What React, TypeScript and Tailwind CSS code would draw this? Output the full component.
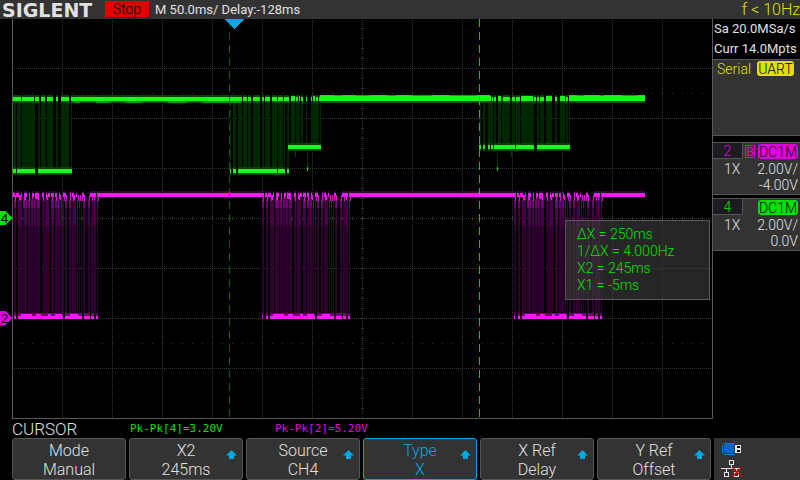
import clsx from "clsx"

type Span = [number, number]

// Plot coordinates: 712 x 400, graticule starts at x = 12
const GREEN_HIGH: Span[] = [
  [13, 21], [22, 34], [35, 39], [41, 45], [47, 53], [56, 58], [61, 69], [71, 242],
  [243, 247], [248, 251], [253, 260], [262, 264], [265, 270], [272, 277], [278, 283], [284, 289],
  [291, 295], [296, 298], [299, 300], [301, 303], [306, 307], [311, 312], [313, 315], [316, 318],
  [319, 491], [492, 493], [494, 496], [498, 501], [503, 510], [512, 515], [516, 520], [521, 533],
  [534, 536], [537, 539], [540, 544], [546, 552], [555, 557], [560, 565], [566, 568], [569, 645],
]
const GREEN_BOLD: Span[] = [[291, 295], [299, 300], [313, 315], [320, 491], [498, 501], [521, 533], [546, 552], [560, 565], [569, 645]]
const GREEN_LOW: Span[] = [[13, 16], [17, 35], [38, 72], [230, 231], [233, 236], [238, 277], [278, 285], [287, 289]]
const GREEN_MID: Span[] = [[288, 321], [479, 481], [483, 485], [488, 490], [491, 493], [494, 515], [516, 534], [537, 570]]
const GREEN_DEEP_BARS: Span[] = [
  [13, 16], [17, 21], [22, 35], [38, 40], [41, 46], [47, 53], [56, 58], [61, 69], [71, 72],
  [230, 231], [233, 236], [238, 242], [243, 247], [248, 251], [253, 260], [262, 264], [265, 270],
  [272, 277], [278, 283], [284, 285], [287, 289],
]
const GREEN_SHORT_BARS: Span[] = [
  [291, 295], [296, 300], [301, 303], [306, 307], [311, 319], [320, 321],
  [479, 481], [483, 485], [488, 493], [494, 496], [498, 501], [502, 510], [512, 515], [516, 520],
  [521, 534], [537, 539], [540, 544], [546, 552], [555, 557], [560, 565], [566, 568], [569, 570],
]

// one UART frame on channel 2, relative to its start
const FRAME_STARTS = [10, 262, 514]
const FRAME_BARS: Span[] = [
  [0, 2], [4, 6], [8, 12], [13, 17], [18, 30], [32, 39], [41, 44], [45, 52], [53, 54], [55, 57],
  [59, 61], [62, 66], [67, 68], [69, 70], [71, 72], [73, 75], [78, 80], [81, 86], [87, 88],
]
const FRAME_HIGH: Span[] = [
  [0, 2], [3, 5], [6, 9], [11, 12], [14, 17], [19, 20], [22, 24], [25, 29], [32, 34], [36, 37], [38, 40],
  [41, 44], [45, 47], [49, 50], [53, 56], [60, 61], [62, 64], [66, 67], [72, 74], [80, 86], [87, 88],
]
const FRAME_LOW: Span[] = [[0, 1], [4, 6], [8, 53], [55, 72], [74, 80], [81, 84], [86, 88]]
const MAGENTA_IDLE: Span[] = [[98, 262], [350, 514], [602, 645]]

const softKeys = [
  { label: "Mode", value: "Manual", arrow: false, active: false },
  { label: "X2", value: "245ms", arrow: true, active: false },
  { label: "Source", value: "CH4", arrow: true, active: false },
  { label: "Type", value: "X", arrow: true, active: true },
  { label: "X Ref", value: "Delay", arrow: true, active: false },
  { label: "Y Ref", value: "Offset", arrow: true, active: false },
]

function Spans({ spans, y, h, fill, dx = 0 }: { spans: Span[]; y: number; h: number; fill: string; dx?: number }) {
  return (
    <>
      {spans.map(([a, b]) => {
        const from = Math.max(a + dx, 13)
        const to = b + dx
        return to > from ? <rect key={a} x={from} y={y} width={to - from} height={h} fill={fill} /> : null
      })}
    </>
  )
}

function Graticule() {
  const cols = Array.from({ length: 13 }, (_, i) => 62 + i * 50)
  const rows = Array.from({ length: 7 }, (_, i) => 49 + i * 50)
  return (
    <g stroke="#363636" strokeDasharray="1 1">
      {cols.map((x) => <line key={x} x1={x + 0.5} x2={x + 0.5} y1="1" y2="399" />)}
      {rows.map((y) => <line key={y} x1="14" x2="712" y1={y + 0.5} y2={y + 0.5} />)}
      {/* center axis ticks */}
      <line x1="22" x2="712" y1="199.5" y2="199.5" strokeWidth="3" strokeDasharray="1 9" />
      <line x1="362.5" x2="362.5" y1="9" y2="399" strokeWidth="3" strokeDasharray="1 9" />
      <line x1="22" x2="712" y1="74.5" y2="74.5" strokeDasharray="1 9" />
      <line x1="22" x2="712" y1="324.5" y2="324.5" strokeDasharray="1 9" />
    </g>
  )
}

function GreenTrace() {
  return (
    <g>
      <Spans spans={GREEN_DEEP_BARS} y={76} h={74} fill="#002800" />
      <Spans spans={GREEN_SHORT_BARS} y={76} h={50} fill="#002800" />
      <Spans spans={GREEN_HIGH} y={76} h={8} fill="#004600" />
      <Spans spans={GREEN_HIGH} y={78} h={4} fill="#14ff14" />
      <Spans spans={GREEN_BOLD} y={77} h={5} fill="#14ff14" />
      <Spans spans={[[72, 242]]} y={82} h={1} fill="#008200" />
      <Spans spans={[[75, 80], [96, 110], [126, 142], [168, 186], [203, 241]]} y={82} h={2} fill="#009600" />
      <Spans spans={[[320, 490], [569, 645]]} y={76} h={1} fill="#14e614" />
      <Spans spans={[[334, 342], [356, 370], [388, 396], [412, 432], [450, 477], [577, 584], [600, 604], [622, 638]]} y={76} h={1} fill="#14a014" />
      <Spans spans={GREEN_LOW} y={148} h={8} fill="#004600" />
      <Spans spans={GREEN_LOW} y={150} h={4} fill="#14ff14" />
      <Spans spans={GREEN_MID} y={124} h={8} fill="#004600" />
      <Spans spans={GREEN_MID} y={126} h={4} fill="#14ff14" />
      {/* glitches below the mid level */}
      <Spans spans={[[295, 296], [511, 512]]} y={132} h={6} fill="#004600" />
      <Spans spans={[[307, 308], [497, 498]]} y={132} h={20} fill="#003000" />
      <Spans spans={[[307, 308], [497, 498]]} y={148} h={4} fill="#14e014" />
    </g>
  )
}

function MagentaTrace() {
  return (
    <g>
      {FRAME_STARTS.map((start) => (
        <g key={start}>
          <Spans spans={FRAME_BARS} dx={start} y={178} h={118} fill="#300030" />
          <Spans spans={FRAME_BARS.map(([a, b], i): Span => [i % 2 ? a + 1 : a, b])} dx={start} y={181} h={26} fill="#460046" />
          <Spans spans={FRAME_BARS.filter((_, i) => i % 3 !== 2)} dx={start} y={181} h={8} fill="#720072" />
          <Spans spans={[[20, 21], [23, 24], [26, 27], [34, 35], [47, 48], [50, 51], [83, 84]]} dx={start} y={181} h={114} fill="#220022" />
          <Spans spans={FRAME_HIGH} dx={start} y={172} h={3} fill="#3c003c" />
          <Spans spans={FRAME_HIGH} dx={start} y={174} h={4} fill="#ff14ff" />
          <Spans spans={FRAME_BARS.map(([a]): Span => [a + 1, a + 2])} dx={start} y={176} h={6} fill="#d214d2" />
          <Spans spans={FRAME_BARS.filter(([a, b]) => b - a > 3).map(([, b]): Span => [b - 2, b - 1])} dx={start} y={176} h={5} fill="#ff14ff" />
          <Spans spans={[[22, 23], [25, 29], [33, 34], [36, 38], [46, 47], [49, 51]]} dx={start} y={177} h={3} fill="#e014e0" />
          <Spans spans={FRAME_LOW} dx={start} y={294} h={3} fill="#6e006e" />
          <Spans spans={[[11, 22], [26, 31], [38, 41], [45, 52], [60, 68]]} dx={start} y={295} h={2} fill="#ff14ff" />
          <Spans spans={FRAME_LOW} dx={start} y={297} h={3} fill="#ff14ff" />
        </g>
      ))}
      <Spans spans={MAGENTA_IDLE} y={172} h={2} fill="#3c003c" />
      <Spans spans={MAGENTA_IDLE} y={174} h={4} fill="#ff14ff" />
    </g>
  )
}

function Plot() {
  return (
    <svg viewBox="0 0 712 400" preserveAspectRatio="none" shapeRendering="crispEdges" className="block h-full w-full font-['Liberation_Sans',sans-serif]">
      <Graticule />
      <GreenTrace />
      <MagentaTrace />
      <path d="M12.5 0V399.5H712" fill="none" stroke="#5a5a5a" />
      {/* cursors */}
      <line x1="229.5" x2="229.5" y1="0" y2="399" stroke="#006400" strokeDasharray="8 5" />
      <line x1="479.5" x2="479.5" y1="0" y2="399" stroke="#00d200" strokeDasharray="8 5" />
      <path d="M225 0H244L234.5 10Z" fill="#00aae1" />
      <path d="M0 192H5L12 199L5 206H0Z" fill="#00e100" />
      <path d="M0 292H5L12 299L5 306H0Z" fill="#e100e1" />
      <text x="1" y="204" fontSize="13">4</text>
      <text x="1" y="304" fontSize="13">2</text>
    </svg>
  )
}

function Readout() {
  return (
    <div className="absolute top-[201px] right-[2px] w-[145px] border border-[#5a5a5a] bg-[#404040]/60 py-[5px] pl-[11px] text-[14px] leading-[17px] text-[#00e100]">
      <div>ΔX = 250ms</div>
      <div>1/ΔX = 4.000Hz</div>
      <div>X2 = 245ms</div>
      <div>X1 = -5ms</div>
    </div>
  )
}

function Channel({ id, scale, offset, bandwidth = false }: { id: string; scale: string; offset: string; bandwidth?: boolean }) {
  const magenta = id === "2"
  return (
    <section className="border-y border-[#555] bg-[#333] text-[14px] leading-4 text-[#e1e1e1]">
      <div className="flex items-start justify-between">
        <div className={clsx("h-4 w-[30px] rounded-br-xs border-r border-b border-[#555] bg-[#1c1c20] text-center leading-4", magenta ? "text-[#e100e1]" : "text-[#00e100]")}>{id}</div>
        <div className="mt-[1px] mr-[2px] flex items-center gap-[3px] text-black">
          {bandwidth && <span className="h-[13px] w-[10px] border border-[#e100e1] text-center text-[12px] leading-[12px] font-normal text-[#e100e1]">B</span>}
          <span className={clsx("h-[15px] w-10 rounded-[3px] text-center leading-4", magenta ? "bg-[#e100e1]" : "bg-[#00e100]")}>DC1M</span>
        </div>
      </div>
      <div className="mt-[2px] flex justify-between pr-[2px] pl-[11px]">
        <span>1X</span>
        <span>{scale}</span>
      </div>
      <div className="pr-[2px] pb-[1px] text-right">{offset}</div>
    </section>
  )
}

function SidePanel() {
  return (
    <aside className="flex w-[88px] shrink-0 flex-col border-l border-[#5a5a5a]">
      <div className="pl-[1px] text-[13px] leading-5 font-normal whitespace-nowrap text-[#e1e1e1]">
        <div>Sa 20.0MSa/s</div>
        <div>Curr 14.0Mpts</div>
      </div>
      <div className="mb-[6px] flex h-[77px] items-start gap-[6px] border-y border-[#555] bg-[#333] pt-[1px] pl-[4px] text-[14px] leading-4 text-[#e1e100]">
        <span>Serial</span>
        <span className="h-[15px] w-[37px] rounded-[3px] bg-[#e1e100] text-center text-black">UART</span>
      </div>
      <div className="flex flex-col gap-[3px]">
        <Channel id="2" scale="2.00V/" offset="-4.00V" bandwidth />
        <Channel id="4" scale="2.00V/" offset="0.0V" />
      </div>
    </aside>
  )
}

function StatusIcons() {
  return (
    <div className="ml-[3px] w-[86px] shrink-0 bg-[#333] pl-[7px]">
      <svg width="22" height="42" viewBox="0 0 22 42" shapeRendering="crispEdges" fill="none">
        <path d="M4 6H13V15H4L3 14V7Z" fill="#0069c3" />
        <path d="M14 5.5H3.5L1.5 7.5V14.5L3.5 16.5H14" stroke="#0082d2" />
        <path d="M14 7H20V15H14Z" fill="#e1e1e1" />
        <path d="M16 8H19V10H16ZM16 12H19V14H16Z" fill="#000" />
        <path d="M8.5 22.5H12.5V26.5H8.5ZM10.5 27V30M0 30.5H20M5.5 31V34M15.5 31V34M3.5 34.5H7.5V38.5H3.5ZM13.5 34.5H17.5V38.5H13.5Z" stroke="#e1e1e1" />
        <path d="M11 29L21 39M21 29L11 39" stroke="#e10000" strokeWidth="1.4" shapeRendering="auto" />
      </svg>
    </div>
  )
}

function UpArrow() {
  return (
    <svg width="11" height="9" viewBox="0 0 11 9" className="absolute top-[11px] right-[5px] fill-current text-[#00aae1]">
      <path d="M5.5 0L11 5.5H8V9H3V5.5H0Z" />
    </svg>
  )
}

export default function App() {
  return (
    <div className="flex h-screen flex-col overflow-hidden bg-black font-[Roboto,'Liberation_Sans',sans-serif] font-light">
      <header className="flex h-[19px] shrink-0 items-center bg-[#333] text-[13px] leading-[19px] font-normal text-[#e1e1e1]">
        <h1 className="w-[105px] pl-[2px] font-['DejaVu_Sans',sans-serif] text-[19px] leading-[22px] font-bold">SIGLENT</h1>
        <span className="mb-[1px] h-4 w-11 bg-[#e10000] text-center text-[14px] leading-[17px] font-light text-black">Stop</span>
        <span className="ml-[6px]">M 50.0ms/ Delay:-128ms</span>
        <span className="ml-auto text-[16px] font-light text-[#e1e100]">f &lt; 10Hz</span>
      </header>

      <main className="flex min-h-0 flex-1">
        <div className="relative min-w-0 flex-1">
          <Plot />
          <Readout />
        </div>
        <SidePanel />
      </main>

      <div className="flex h-[19px] shrink-0 items-center pt-[2px] pl-3 font-['DejaVu_Sans_Mono',monospace] text-[11px] font-normal">
        <h2 className="w-[118px] font-[Roboto,sans-serif] text-[17px] leading-[19px] font-light text-[#e1e1e1]">CURSOR</h2>
        <span className="w-[145px] text-[#00e100]">Pk-Pk[4]=3.20V</span>
        <span className="text-[#e100e1]">Pk-Pk[2]=5.20V</span>
      </div>

      <footer className="flex h-[42px] shrink-0 pl-3">
        <nav className="grid flex-1 grid-cols-6 gap-[3px]">
          {softKeys.map((key) => (
            <button
              key={key.label}
              className={clsx(
                "relative rounded-[3px] border bg-[#333] pt-[2px] text-center text-[16px] leading-[19px]",
                key.active ? "border-[#00aae1] text-[#00aae1]" : "border-[#555] text-[#e1e1e1]"
              )}
            >
              <div>{key.label}</div>
              <div>{key.value}</div>
              {key.arrow && <UpArrow />}
            </button>
          ))}
        </nav>
        <StatusIcons />
      </footer>
    </div>
  )
}
